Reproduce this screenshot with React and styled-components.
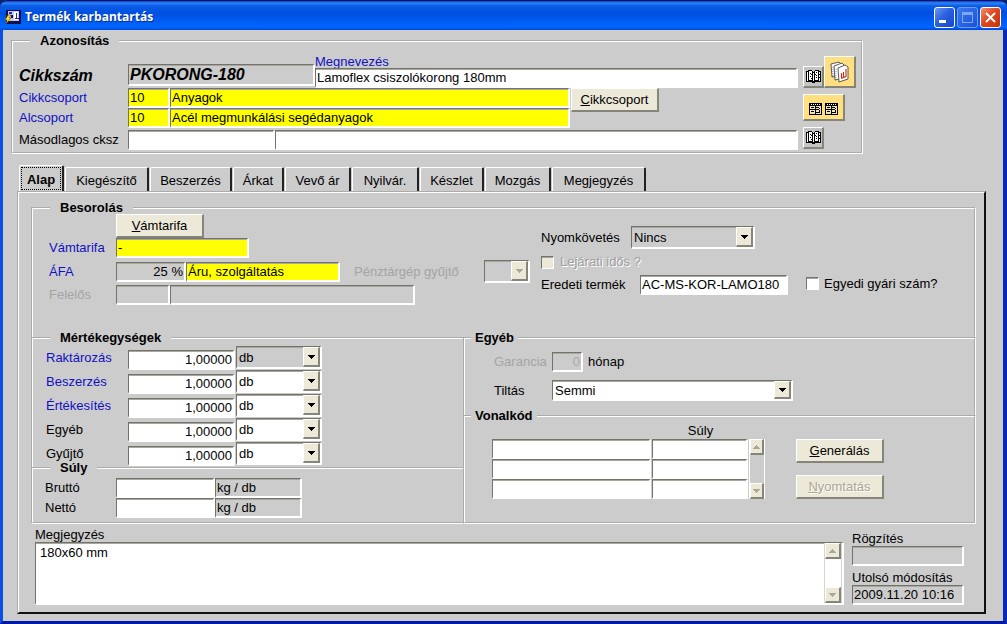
import React, { useState } from 'react';
import styled, { createGlobalStyle, css } from 'styled-components';

const GlobalStyle = createGlobalStyle`
  * {
    box-sizing: border-box;
  }

  body {
    margin: 0;
    background: #0a246a;
    color: #000;
    font-family: 'Liberation Sans', Arial, sans-serif;
    font-size: 13px;
    line-height: 14px;
  }

  input, select, textarea, button {
    font: inherit;
    color: inherit;
    border-radius: 0;
    margin: 0;
  }
`;

const tones = {
  white: '#fff',
  yellow: '#ff0',
  gray: '#ccc',
};

const sunken = css`
  border: solid #73736a;
  border-width: 1px 2px 2px 1px;
  border-right-color: #fff;
  border-bottom-color: #fff;
  box-shadow: inset 0 1px 0 #a8a8a0;
`;

const raised = css`
  border: solid #fff;
  border-width: 2px;
  border-right-color: #85857a;
  border-bottom-color: #85857a;
`;

/* Window frame */

const Window = styled.main`
  min-height: 100vh;
  background: #ccc;
  border: solid #0a4fe0;
  border-width: 0 4px 3px 3px;
  border-right-color: #0a28b4;
  border-bottom-color: #0018a8;
  border-radius: 7px 7px 0 0;
`;

const TitleBar = styled.header`
  display: flex;
  align-items: center;
  gap: 4px;
  height: 30px;
  margin: 0 -4px 0 -3px;
  padding: 3px 6px 0 5px;
  border-top: 1px solid #001060;
  border-radius: 7px 7px 0 0;
  background: linear-gradient(#0a3ec8 0, #2c84f8 2px, #0a5ce6 5px, #0050e0 12px, #0058ec 18px, #0066ff 26px, #0048d8 100%);
`;

const WindowTitle = styled.h1`
  flex: 1;
  margin: 0;
  color: #fff;
  font-family: 'Open Sans', sans-serif;
  font-size: 12px;
  font-weight: 700;
  line-height: 16px;
  text-shadow: 1px 1px 0 #0a2f8c;
`;

const CaptionButtons = styled.div`
  display: flex;
  gap: 2px;
`;

const CaptionButton = styled.button`
  display: grid;
  place-items: center;
  width: 21px;
  height: 21px;
  padding: 0;
  border: 1px solid ${({ $dim }) => ($dim ? '#6f9cf0' : '#fff')};
  border-radius: 3px;
  background: ${({ $close, $dim }) => {
    if ($close) return 'linear-gradient(135deg, #f09070, #e04820 45%, #c83008)';
    if ($dim) return 'linear-gradient(135deg, #3a78ec, #1a52d8)';
    return 'linear-gradient(135deg, #6a98f4, #2a60e0 45%, #1846c8)';
  }};
`;

const Body = styled.div`
  padding: 5px 0 7px;
`;

/* Groups */

const Group = styled.fieldset`
  min-width: 0;
  margin: 0;
  padding: 0;
  border: 2px groove #fff;
  border-width: ${({ $edges }) => $edges || '2px'};

  & + & {
    margin-top: -6px;
  }
`;

const GroupTitle = styled.legend`
  margin-left: ${({ $near }) => ($near ? '6px' : '17px')};
  padding: 0 ${({ $near }) => ($near ? '4px' : '10px')};
  font-weight: 700;
  line-height: 12px;
`;

const GroupBody = styled.div`
  padding: ${({ $pad }) => $pad};
`;

const Identity = styled(Group)`
  margin: 0 140px 0 8px;
`;

const Columns = styled.div`
  display: flex;
  align-items: flex-start;
  gap: ${({ $gap }) => $gap || '0'};
`;

const Stack = styled.div`
  display: flex;
  flex-direction: column;
  flex: ${({ $grow }) => ($grow ? '1' : 'none')};
  gap: ${({ $gap }) => $gap || '0'};
  padding: ${({ $pad }) => $pad || '0'};
  min-width: 0;
`;

const Row = styled.div`
  display: flex;
  align-items: ${({ $align }) => $align || 'center'};
  gap: ${({ $gap }) => $gap || '0'};
`;

const Label = styled.label`
  flex: none;
  width: ${({ $width }) => $width || 'auto'};
  color: ${({ $link, $off }) => ($link ? '#1010c4' : $off ? '#a4a4a4' : 'inherit')};
  white-space: nowrap;
`;

const BigLabel = styled(Label)`
  padding-bottom: 5px;
  font-size: 16px;
  font-style: italic;
  font-weight: 700;
`;

const CaptionLabel = styled(Label)`
  line-height: 12px;
`;

const UnitLabel = styled(Label)`
  padding-top: 5px;
`;

const EtchedLabel = styled(Label)`
  color: #a0a0a0;
  text-shadow: 1px 1px 0 #fff;
`;

const Field = styled.input`
  ${sunken}
  flex: ${({ $width }) => ($width ? 'none' : '1')};
  width: ${({ $width }) => $width || '100%'};
  min-width: 0;
  height: 20px;
  padding: 0 1px;
  background: ${({ $tone }) => tones[$tone || 'white']};
  text-align: ${({ $right }) => ($right ? 'right' : 'left')};

  &:disabled {
    color: #a8a8a8;
  }
`;

const NameField = styled(Field)`
  flex: none;
`;

const CodeField = styled(Field)`
  height: 22px;
  margin-bottom: 2px;
  font-size: 16px;
  font-style: italic;
  font-weight: 700;
`;

const PushButton = styled.button`
  flex: none;
  width: 88px;
  height: 24px;
  padding: 0;
  ${raised}
  border-width: 1px 2px 2px 1px;
  background: #ece9d8;
  white-space: nowrap;

  &:disabled {
    color: #a9a795;
    text-shadow: 1px 1px 0 #fff;
  }
`;

const IconButton = styled.button`
  display: grid;
  place-items: center;
  flex: none;
  width: ${({ $size }) => ({ sheets: '32px', wide: '42px' })[$size] || '21px'};
  height: ${({ $size }) => ({ sheets: '32px', wide: '27px' })[$size] || '22px'};
  padding: ${({ $size }) => ($size === 'wide' ? '4px 0 0' : '0')};
  ${raised}
  border-width: 1px 2px 2px 1px;
  background: ${({ $size }) => ($size ? '#ffdf80' : '#c4c4c4')};
`;

const ToolColumn = styled.div`
  display: flex;
  flex-direction: column;
  gap: 6px;
  width: 53px;
  margin: 0 5px;
`;

const CheckBox = styled.input`
  appearance: none;
  flex: none;
  width: 13px;
  height: 13px;
  ${sunken}
  border-width: 1px;
  background: #fff;

  &:disabled {
    background: #ece9d8;
  }
`;

/* Drop-down list */

const Combo = styled.div`
  ${sunken}
  display: grid;
  flex: none;
  width: ${({ $width }) => $width};
  height: ${({ $tall }) => ($tall ? '23px' : '21px')};
  background: ${({ $tone }) => tones[$tone || 'white']};

  > * {
    grid-area: 1 / 1;
  }
`;

const ComboSelect = styled.select`
  appearance: none;
  width: 100%;
  min-width: 0;
  padding: 2px 17px 0 2px;
  border: 0;
  background: transparent;
  outline: 0;
`;

const ComboArrow = styled.span`
  display: grid;
  place-items: center;
  justify-self: end;
  width: 17px;
  pointer-events: none;
  ${raised}
  border-width: 1px 2px 2px 1px;
  background: #ece9d8;
`;

const Dropdown = ({ id, label, options, disabled, ...box }) => (
  <Combo {...box}>
    <ComboSelect id={id} aria-label={label} disabled={disabled}>
      {options.map((option) => (
        <option key={option}>{option}</option>
      ))}
    </ComboSelect>
    <ComboArrow>
      <svg width="7" height="4" shapeRendering="crispEdges">
        <path d="M0 0h7v1H6v1H5v1H4v1H3V3H2V2H1V1H0z" fill={disabled ? '#aca899' : '#000'} />
      </svg>
    </ComboArrow>
  </Combo>
);

/* Scroll bar */

const ScrollTrack = styled.div`
  display: flex;
  flex: none;
  flex-direction: column;
  justify-content: space-between;
  width: ${({ $narrow }) => ($narrow ? '16px' : '18px')};
  background: ${({ $tone }) => tones[$tone]};
  border: 1px solid ${({ $narrow }) => ($narrow ? '#fff' : '#d8d6c8')};
  border-width: 0 1px;
`;

const ScrollButton = styled.button`
  display: grid;
  place-items: center;
  width: 100%;
  height: 16px;
  padding: 0;
  ${raised}
  border-width: 1px 2px 2px 1px;
  background: #ece9d8;
`;

const ScrollBar = (props) => (
  <ScrollTrack {...props}>
    <ScrollButton type="button" aria-label="Fel">
      <svg width="7" height="4" shapeRendering="crispEdges">
        <path d="M3 0h1v1h1v1h1v1h1v1H0V3h1V2h1V1h1z" fill="#aca899" />
      </svg>
    </ScrollButton>
    <ScrollButton type="button" aria-label="Le">
      <svg width="7" height="4" shapeRendering="crispEdges">
        <path d="M0 0h7v1H6v1H5v1H4v1H3V3H2V2H1V1H0z" fill="#aca899" />
      </svg>
    </ScrollButton>
  </ScrollTrack>
);

/* Tabs */

const TabList = styled.nav`
  display: flex;
  align-items: flex-end;
  gap: 1px;
  margin: 11px 0 0 16px;
`;

const Tab = styled.button`
  flex: none;
  width: ${({ $width }) => $width}px;
  height: ${({ $active }) => ($active ? 26 : 24)}px;
  padding: 1px;
  border: solid #fff;
  border-width: 1px 2px 0 1px;
  border-right-color: #222;
  border-radius: 2px 2px 0 0;
  background: #ccc;
  font-weight: ${({ $active }) => ($active ? 700 : 400)};
  white-space: nowrap;

  span {
    display: block;
    padding: ${({ $active }) => ($active ? '5px 0 2px' : '4px 0 2px')};
    border: 1px ${({ $active }) => ($active ? 'dotted #000' : 'solid transparent')};
  }
`;

const TabPanel = styled.section`
  margin: 0 17px 0 14px;
  padding: 9px 8px 7px 12px;
  border: 2px groove #fff;
  border-right: 2px solid #111;
  border-bottom: 2px solid #111;
`;

const Split = styled.div`
  display: grid;
  grid-template-columns: 432fr 513fr;
  margin-top: -6px;
`;

const BarcodeTable = styled.table`
  border-collapse: collapse;

  th {
    height: 17px;
    padding: 0;
    font-weight: 400;
  }

  td {
    padding: 0 1px 0 0;
  }

  input {
    display: block;
  }
`;

const BarcodeScroll = styled.div`
  display: flex;
  height: 60px;
`;

const NoteRow = styled.div`
  display: flex;
  gap: 8px;
  margin: 4px 12px 0 4px;
`;

const NoteBox = styled.div`
  ${sunken}
  display: flex;
  flex: 1;
  background: #fff;
`;

const NoteText = styled.textarea`
  flex: 1;
  min-width: 0;
  height: 60px;
  padding: 3px 4px;
  border: 0;
  background: transparent;
  outline: 0;
  resize: none;
  overflow: hidden;
`;

/* Icons */

const AppIcon = () => (
  <svg width="16" height="15" viewBox="0 0 16 15" aria-hidden="true">
    <path d="M1 0h15v14H1z" fill="#10104c" />
    <path d="M3 1h11v10H3z" fill="#c8c8f0" />
    <path d="M9 2h4v8H9z" fill="#fff" />
    <path d="M4 2h3v2H4zM11 3h1v5h2v1h-4V8h1z" fill="#2828a0" />
    <path d="M6 5h2v3H6z" fill="#101050" />
    <path d="M3 5L0 10h2l-1 4 5-6H4l2-3z" fill="#ffe020" stroke="#503800" strokeWidth=".5" />
  </svg>
);

const BookIcon = () => (
  <svg width="15" height="13" viewBox="0 0 15 13" shapeRendering="crispEdges" aria-hidden="true">
    <path d="M2 0h4v1h1v1h1V1h1V0h4v1h2v11H9v1H6v-1H0V1h2z" fill="#000" />
    <path d="M3 1h3v9H3zM9 1h3v9H9zM1 2h1v9H1zM13 2h1v9h-1zM7 3h1v8H7z" fill="#fff" />
    <path d="M4 3h1v1H4zM5 4h1v1H5zM4 6h1v1H4zM5 8h1v1H5zM9 4h1v1H9zM10 2h1v1h-1zM10 5h1v1h-1zM10 7h1v1h-1zM13 4h1v1h-1zM13 7h1v1h-1z" fill="#000" />
  </svg>
);

const SheetsIcon = () => (
  <svg width="20" height="22" viewBox="0 0 20 22" aria-hidden="true">
    <g fill="#fff" stroke="#333" strokeWidth=".8">
      <path d="M1 3l8-2 2 2v11l-9 2z" />
      <path d="M4 5l8-3 2 2v13l-9 2z" />
      <path d="M8 7l7-3 3 2v12l-9 3z" />
    </g>
    <path d="M3 6v9M6 8v9" stroke="#8888b8" strokeDasharray="1 1" fill="none" />
    <path d="M11.500 12v5M13.500 11v5M16 8v8M11 17.500l5-2" stroke="#d02810" strokeWidth="1.100" fill="none" />
  </svg>
);

const FormsIcon = () => (
  <svg width="29" height="12" viewBox="0 0 29 12" shapeRendering="crispEdges" aria-hidden="true">
    {[0, 16].map((x) => (
      <g key={x} transform={`translate(${x} 0)`}>
        <path d="M0 0h13v12H0z" fill="#000" />
        <path d="M1 3h5v8H1zM7 3h5v8H7z" fill="#f0e4b0" />
        <path d="M2 1h1v1H2zM4 1h1v1H4zM6 1h1v1H6zM8 1h1v1H8zM10 1h1v1h-1z" fill="#fff" />
        <path d="M2 4h3v1H2zM2 8h3v1H2zM1 6h5v1H1zM7 4h3v1H7zM10 5h1v1h-1zM7 6h3v1H7zM10 7h1v2h-1zM7 9h4v1H7z" fill="#000" />
      </g>
    ))}
  </svg>
);

const tabs = [
  ['Alap', 45],
  ['Kiegészítő', 84],
  ['Beszerzés', 82],
  ['Árkat', 51],
  ['Vevő ár', 66],
  ['Nyilvár.', 67],
  ['Készlet', 64],
  ['Mozgás', 66],
  ['Megjegyzés', 94],
];

const units = [
  { id: 'raktarozas', name: 'Raktározás', link: true, tone: 'gray' },
  { id: 'beszerzes', name: 'Beszerzés', link: true },
  { id: 'ertekesites', name: 'Értékesítés', link: true },
  { id: 'egyeb', name: 'Egyéb' },
  { id: 'gyujto', name: 'Gyűjtő' },
];

const weights = [
  { id: 'brutto', name: 'Bruttó' },
  { id: 'netto', name: 'Nettó' },
];

const IdentityGroup = () => (
  <Identity>
    <GroupTitle>Azonosítás</GroupTitle>
    <GroupBody $pad="9px 0 2px 6px">
      <Columns>
        <Stack $grow>
          <Row $align="flex-end">
            <BigLabel htmlFor="cikkszam" $width="109px">Cikkszám</BigLabel>
            <CodeField id="cikkszam" $width="187px" $tone="gray" defaultValue="PKORONG-180" />
            <Stack $grow>
              <CaptionLabel htmlFor="megnevezes" $link>Megnevezés</CaptionLabel>
              <NameField id="megnevezes" defaultValue="Lamoflex csiszolókorong 180mm" />
            </Stack>
          </Row>
          <Columns $gap="1px">
            <Stack>
              <Row>
                <Label htmlFor="cikkcsoport" $width="109px" $link>Cikkcsoport</Label>
                <Field id="cikkcsoport" $width="42px" $tone="yellow" defaultValue="10" />
                <Field aria-label="Cikkcsoport neve" $width="400px" $tone="yellow" defaultValue="Anyagok" />
              </Row>
              <Row>
                <Label htmlFor="alcsoport" $width="109px" $link>Alcsoport</Label>
                <Field id="alcsoport" $width="42px" $tone="yellow" defaultValue="10" />
                <Field aria-label="Alcsoport neve" $width="400px" $tone="yellow" defaultValue="Acél megmunkálási segédanyagok" />
              </Row>
            </Stack>
            <PushButton type="button"><u>C</u>ikkcsoport</PushButton>
          </Columns>
          <Stack $pad="2px 0 0">
            <Row>
              <Label htmlFor="masodlagos" $width="109px">Másodlagos cksz</Label>
              <Field id="masodlagos" $width="147px" />
              <Field aria-label="Másodlagos megnevezés" />
            </Row>
          </Stack>
        </Stack>
        <ToolColumn>
          <Row $align="flex-end">
            <IconButton type="button" aria-label="Keresés"><BookIcon /></IconButton>
            <IconButton type="button" aria-label="Kimutatás" $size="sheets"><SheetsIcon /></IconButton>
          </Row>
          <IconButton type="button" aria-label="Űrlapok" $size="wide"><FormsIcon /></IconButton>
          <IconButton type="button" aria-label="Másodlagos keresés"><BookIcon /></IconButton>
        </ToolColumn>
      </Columns>
    </GroupBody>
  </Identity>
);

const ClassificationGroup = () => (
  <Group $edges="2px 2px 0 2px">
    <GroupTitle>Besorolás</GroupTitle>
    <GroupBody $pad="0 0 33px 16px">
      <Columns $gap="11px">
        <Stack>
          <Stack $pad="0 0 0 67px">
            <PushButton type="button"><u>V</u>ámtarifa</PushButton>
          </Stack>
          <Stack $gap="2px">
            <Row>
              <Label htmlFor="vamtarifa" $width="67px" $link>Vámtarifa</Label>
              <Field id="vamtarifa" $width="133px" $tone="yellow" defaultValue="-" />
            </Row>
            <Row>
              <Label htmlFor="afa" $width="67px" $link>ÁFA</Label>
              <Field id="afa" $width="70px" $tone="gray" $right defaultValue="25 %" />
              <Field aria-label="ÁFA megnevezése" $width="154px" $tone="yellow" defaultValue="Áru, szolgáltatás" />
              <Stack $pad="0 0 0 14px">
                <Label htmlFor="penztargep" $width="130px" $off>Pénztárgép gyűjtő</Label>
              </Stack>
              <Dropdown id="penztargep" $width="46px" $tall $tone="gray" options={['']} disabled />
            </Row>
            <Row>
              <Label htmlFor="felelos" $width="67px" $off>Felelős</Label>
              <Field id="felelos" $width="54px" $tone="gray" disabled />
              <Field aria-label="Felelős neve" $width="245px" $tone="gray" disabled />
            </Row>
          </Stack>
        </Stack>
        <Stack $gap="6px" $pad="12px 0 0">
          <Row>
            <Label htmlFor="nyomkovetes" $width="90px">Nyomkövetés</Label>
            <Dropdown id="nyomkovetes" $width="124px" $tall $tone="gray" options={['Nincs']} />
          </Row>
          <Row $gap="6px">
            <CheckBox id="lejarati" type="checkbox" disabled />
            <EtchedLabel htmlFor="lejarati">Lejárati idős ?</EtchedLabel>
          </Row>
          <Row>
            <Label htmlFor="eredeti" $width="99px">Eredeti termék</Label>
            <Field id="eredeti" $width="148px" defaultValue="AC-MS-KOR-LAMO180" />
            <Stack $pad="0 0 3px 18px">
              <Row $gap="5px">
                <CheckBox id="egyedi" type="checkbox" />
                <Label htmlFor="egyedi">Egyedi gyári szám?</Label>
              </Row>
            </Stack>
          </Row>
        </Stack>
      </Columns>
    </GroupBody>
  </Group>
);

const UnitsGroup = () => (
  <Group $edges="2px 0 0 2px">
    <GroupTitle>Mértékegységek</GroupTitle>
    <GroupBody $pad="2px 0 2px 13px">
      {units.map(({ id, name, link, tone }) => (
        <Columns key={id}>
          <UnitLabel htmlFor={id} $width="82px" $link={link}>{name}</UnitLabel>
          <Stack $pad="4px 1px 0 0">
            <Field id={id} $width="107px" $right defaultValue="1,00000" />
          </Stack>
          <Dropdown label={`${name} egysége`} $width="86px" $tall $tone={tone} options={['db']} />
        </Columns>
      ))}
    </GroupBody>
  </Group>
);

const WeightGroup = () => (
  <Group $edges="2px 0 2px 2px">
    <GroupTitle>Súly</GroupTitle>
    <GroupBody $pad="4px 0 4px 12px">
      {weights.map(({ id, name }) => (
        <Row key={id}>
          <Label htmlFor={id} $width="71px">{name}</Label>
          <Field id={id} $width="99px" />
          <Field aria-label={`${name} egysége`} $width="87px" $tone="gray" defaultValue="kg / db" />
        </Row>
      ))}
    </GroupBody>
  </Group>
);

const OtherGroup = () => (
  <Group $edges="2px 2px 0 2px">
    <GroupTitle $near>Egyéb</GroupTitle>
    <GroupBody $pad="8px 0 15px 29px">
      <Stack $gap="8px">
        <Row>
          <Label htmlFor="garancia" $width="58px" $off>Garancia</Label>
          <Field id="garancia" $width="31px" $tone="gray" $right defaultValue="0" disabled />
          <Stack $pad="0 0 0 5px">hónap</Stack>
        </Row>
        <Row>
          <Label htmlFor="tiltas" $width="58px">Tiltás</Label>
          <Dropdown id="tiltas" $width="241px" options={['Semmi']} />
        </Row>
      </Stack>
    </GroupBody>
  </Group>
);

const BarcodeGroup = () => (
  <Group>
    <GroupTitle $near>Vonalkód</GroupTitle>
    <GroupBody $pad="0 0 23px 27px">
      <Row $align="flex-end">
        <BarcodeTable>
          <thead>
            <tr>
              <th aria-label="Vonalkód" />
              <th>Súly</th>
            </tr>
          </thead>
          <tbody>
            {[1, 2, 3].map((n) => (
              <tr key={n}>
                <td><Field $width="159px" aria-label={`Vonalkód ${n}`} /></td>
                <td><Field $width="96px" aria-label={`Súly ${n}`} /></td>
              </tr>
            ))}
          </tbody>
        </BarcodeTable>
        <BarcodeScroll>
          <ScrollBar $narrow $tone="gray" />
        </BarcodeScroll>
        <Stack $gap="12px" $pad="0 0 0 31px">
          <PushButton type="button"><u>G</u>enerálás</PushButton>
          <PushButton type="button" disabled><u>N</u>yomtatás</PushButton>
        </Stack>
      </Row>
    </GroupBody>
  </Group>
);

const Notes = () => (
  <NoteRow>
    <Stack $grow>
      <Label htmlFor="megjegyzes">Megjegyzés</Label>
      <NoteBox>
        <NoteText id="megjegyzes" defaultValue="180x60 mm" />
        <ScrollBar $tone="white" />
      </NoteBox>
    </Stack>
    <Stack $gap="5px" $pad="4px 0 0">
      <Stack>
        <Label htmlFor="rogzites">Rögzítés</Label>
        <Field id="rogzites" $width="112px" $tone="gray" readOnly />
      </Stack>
      <Stack>
        <Label htmlFor="modositas">Utolsó módosítás</Label>
        <Field id="modositas" $width="112px" $tone="gray" defaultValue="2009.11.20 10:16" readOnly />
      </Stack>
    </Stack>
  </NoteRow>
);

const App = () => {
  const [active, setActive] = useState('Alap');

  return (
    <>
      <GlobalStyle />
      <Window>
        <TitleBar>
          <AppIcon />
          <WindowTitle>Termék karbantartás</WindowTitle>
          <CaptionButtons>
            <CaptionButton type="button" aria-label="Kis méret">
              <svg width="13" height="13"><path d="M1 9h7v3H1z" fill="#fff" /></svg>
            </CaptionButton>
            <CaptionButton type="button" aria-label="Teljes méret" $dim>
              <svg width="13" height="13"><path d="M1 1h11v11H1zM2 4v7h9V4z" fill="#7fa6f4" fillRule="evenodd" /></svg>
            </CaptionButton>
            <CaptionButton type="button" aria-label="Bezárás" $close>
              <svg width="13" height="13"><path d="M2 2l9 9M11 2l-9 9" stroke="#fff" strokeWidth="2" /></svg>
            </CaptionButton>
          </CaptionButtons>
        </TitleBar>
        <Body>
          <IdentityGroup />
          <TabList>
            {tabs.map(([name, width]) => (
              <Tab
                key={name}
                type="button"
                $width={width}
                $active={name === active}
                onClick={() => setActive(name)}
              >
                <span>{name}</span>
              </Tab>
            ))}
          </TabList>
          <TabPanel>
            <ClassificationGroup />
            <Split>
              <div>
                <UnitsGroup />
                <WeightGroup />
              </div>
              <div>
                <OtherGroup />
                <BarcodeGroup />
              </div>
            </Split>
            <Notes />
          </TabPanel>
        </Body>
      </Window>
    </>
  );
};

export default App;
